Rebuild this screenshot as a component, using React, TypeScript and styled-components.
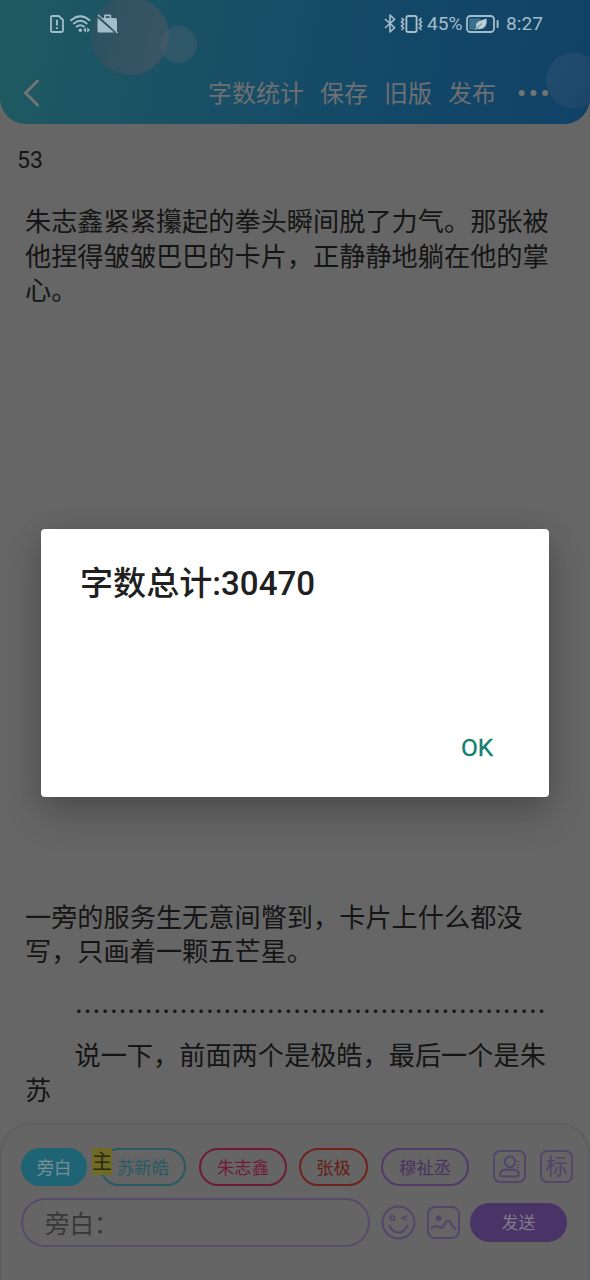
import React from 'react';
import styled, { createGlobalStyle } from 'styled-components';

const GlobalStyle = createGlobalStyle`
  *, *::before, *::after { box-sizing: border-box; }
  html, body { margin: 0; padding: 0; }
  body {
    background: #666666;
    font-family: Roboto, "Noto Sans CJK SC", sans-serif;
    color: #151515;
  }
  svg { display: block; flex: none; }
  button { font: inherit; padding: 0; background: none; border: 0; }
`;

const Screen = styled.div`
  position: relative;
  display: flex;
  flex-direction: column;
  width: 590px;
  height: 1280px;
  overflow: hidden;
  background: #666666;
`;

const Header = styled.header`
  position: relative;
  flex: none;
  display: flex;
  flex-direction: column;
  height: 124px;
  overflow: hidden;
  border-radius: 0 0 26px 26px;
  background: linear-gradient(100deg, #1f5a61 0%, #194f66 38%, #134768 70%, #104267 100%);
`;

const Bubble = styled.span<{ $x: number; $y: number; $r: number; $fill: string }>`
  position: absolute;
  left: ${(p) => p.$x - p.$r}px;
  top: ${(p) => p.$y - p.$r}px;
  width: ${(p) => p.$r * 2}px;
  height: ${(p) => p.$r * 2}px;
  border-radius: 50%;
  background: ${(p) => p.$fill};
`;

const StatusBar = styled.div`
  position: relative;
  display: flex;
  align-items: center;
  justify-content: space-between;
  height: 47px;
  padding: 0 47px 0 50px;
  color: #a3bdcb;
`;

const StatusGroup = styled.div<{ $gap: number }>`
  display: flex;
  align-items: center;
  gap: ${(p) => p.$gap}px;
`;

const StatusText = styled.span<{ $width: number; $offset?: number }>`
  width: ${(p) => p.$width}px;
  margin-left: ${(p) => p.$offset ?? 0}px;
  font-size: 19.2px;
  line-height: 24px;
  white-space: nowrap;
  padding-top: 1px;
`;

const NavBar = styled.nav`
  position: relative;
  display: flex;
  align-items: center;
  height: 77px;
  padding: 14px 41px 0 23px;
  color: #6e7072;
`;

const NavActions = styled.div`
  display: flex;
  align-items: center;
  gap: 16px;
  margin-left: auto;
`;

const NavLink = styled.button`
  padding-top: 3px;
  color: inherit;
  font-size: 24px;
  line-height: 30px;
  white-space: nowrap;
`;

const MoreButton = styled.button`
  margin-left: 6px;
  color: inherit;
`;

const Story = styled.main`
  flex: none;
  display: flex;
  flex-direction: column;
  height: 999px;
  padding: 20px 14px 0 17px;
`;

const LineNumber = styled.div`
  font-size: 23px;
  line-height: 34px;
`;

const Paragraph = styled.p<{ $top: number; $indent?: boolean }>`
  margin: ${(p) => p.$top}px 0 0 8px;
  width: 530px;
  font-family: "Noto Sans CJK SC", sans-serif;
  font-size: 26.2px;
  line-height: 34.5px;
  text-indent: ${(p) => (p.$indent ? '49.5px' : '0')};
`;

const Composer = styled.footer`
  flex: 1;
  display: flex;
  flex-direction: column;
  gap: 13px;
  padding: 23px 15px 0 19px;
  border: 2px solid #5f5e62;
  border-bottom: 0;
  border-radius: 30px 30px 0 0;
  background: #656565;
`;

const ChipRow = styled.div`
  display: flex;
  align-items: center;
  height: 37px;
`;

const Chip = styled.button<{ $w: number; $color: string; $ml?: number; $filled?: boolean; $edge?: string }>`
  position: relative;
  width: ${(p) => p.$w}px;
  height: 38px;
  margin-left: ${(p) => p.$ml ?? 0}px;
  border: ${(p) => (p.$filled ? '2px solid #1f6474' : `2px solid ${p.$edge ?? p.$color}`)};
  border-radius: 19px;
  background: ${(p) => (p.$filled ? '#1f6474' : 'transparent')};
  color: ${(p) => p.$color};
  font-size: 17.3px;
  line-height: 36px;
  white-space: nowrap;
`;

const MainBadge = styled.span`
  position: absolute;
  left: -10px;
  top: -2px;
  width: 20px;
  height: 27px;
  background: #6f6b25;
  color: #2a290f;
  font-size: 20px;
  line-height: 29px;
`;

const ToolButtons = styled.div`
  display: flex;
  gap: 14px;
  margin-left: auto;
`;

const SquareButton = styled.button`
  display: flex;
  align-items: center;
  justify-content: center;
  width: 33px;
  height: 33px;
  border: 2px solid #52476a;
  border-radius: 7px;
  color: #50456a;
  font-size: 22px;
  line-height: 28px;
`;

const InputRow = styled.div`
  display: flex;
  align-items: center;
`;

const MessageField = styled.div`
  display: flex;
  align-items: center;
  width: 349px;
  height: 49px;
  padding: 4px 22px 0 22px;
  border: 2px solid #564b68;
  border-radius: 25px;
  color: #383838;
  font-size: 24.5px;
  line-height: 32px;
`;

const InputIcons = styled.div`
  display: flex;
  align-items: center;
  gap: 11px;
  margin-left: 11px;
`;

const SendButton = styled.button`
  width: 97px;
  height: 39px;
  margin-left: 10px;
  border-radius: 20px;
  background: #4a3367;
  color: #827b8b;
  font-size: 17px;
  line-height: 41px;
`;

const Overlay = styled.div`
  position: absolute;
  inset: 0;
  display: flex;
  align-items: flex-start;
  justify-content: center;
  padding-top: 529px;
`;

const Dialog = styled.section`
  display: flex;
  flex-direction: column;
  justify-content: space-between;
  width: 508px;
  height: 268px;
  padding: 33px 48px 31px 39px;
  border-radius: 4px;
  background: #ffffff;
  box-shadow: 0 18px 38px rgba(0, 0, 0, 0.2), 0 2px 26px rgba(0, 0, 0, 0.12);
`;

const DialogTitle = styled.h1`
  margin: 0;
  font-size: 33.1px;
  font-weight: 500;
  line-height: 44px;
  color: #202020;
`;

const ConfirmButton = styled.button`
  align-self: flex-end;
  width: 48px;
  color: #12806f;
  font-size: 24.5px;
  font-weight: 400;
  line-height: 36px;
  -webkit-text-stroke: 0.3px #12806f;
`;

const SimIcon = () => (
  <svg width="14" height="18" viewBox="0 0 14 18" fill="none" stroke="currentColor">
    <path d="M2.5 1H8.8L13 5V15.5Q13 17 11.5 17H2.5Q1 17 1 15.5V2.5Q1 1 2.5 1Z" strokeWidth="1.8" />
    <path d="M7 4.8V10.6M7 12.2V14" strokeWidth="1.9" />
  </svg>
);

const WifiIcon = () => (
  <svg width="21" height="18" viewBox="0 0 21 18" fill="none" stroke="currentColor" strokeWidth="1.9" strokeLinecap="round">
    <path d="M1 5.2Q10.3 -2.8 19.6 5.2" />
    <path d="M3.9 8.5Q10.3 3.2 16.7 8.5" />
    <path d="M6.8 11.6Q10.3 8.8 13.8 11.6" />
    <circle cx="10.3" cy="15.3" r="1.7" fill="currentColor" stroke="none" />
    <path d="M16 12.5V17.5L13.2 15ZM17.2 12.5V17.5L20 15Z" fill="currentColor" stroke="none" />
  </svg>
);

const BriefcaseOffIcon = () => (
  <svg width="22" height="20" viewBox="0 0 22 20">
    <path d="M3.8 4 20 18.2V6Q20 4 18 4H14.2V1.8Q14.2.6 13 .6H8.2Q7 .6 7 1.8V4ZM8.7 4V2.3H12.6V4Z" fill="currentColor" fillRule="evenodd" />
    <path d="M.5 4.1 17.3 18.6H2Q.5 18.6.5 17Z" fill="currentColor" />
    <path d="M1 1 20.5 19" stroke="currentColor" strokeWidth="1.7" />
    <path d="M2.2 3 19 18.5" stroke="#2c5262" strokeWidth="1" />
  </svg>
);

const BluetoothIcon = () => (
  <svg width="12" height="19" viewBox="0 0 12 19" fill="none" stroke="currentColor" strokeWidth="1.6" strokeLinejoin="round">
    <path d="M1 5 10.6 13.6 6 18V1L10.6 5.4 1 14" />
  </svg>
);

const VibrateIcon = () => (
  <svg width="23" height="18" viewBox="0 0 23 18" fill="none" stroke="currentColor">
    <rect x="6.4" y="1" width="10.2" height="16" rx="1.8" strokeWidth="1.9" />
    <path d="M1.5 3 3.5 5 1.5 7 3.5 9 1.5 11 3.5 13 1.5 15M21.5 3 19.5 5 21.5 7 19.5 9 21.5 11 19.5 13 21.5 15" strokeWidth="1.7" />
  </svg>
);

const BatteryIcon = () => (
  <svg width="33" height="18" viewBox="0 0 33 18" fill="none">
    <rect x="1" y="1" width="27" height="16" rx="3.4" stroke="currentColor" strokeWidth="1.8" />
    <rect x="3.2" y="3.2" width="11.5" height="11.6" rx="1.4" fill="#3c6f8b" />
    <path d="M20.6 3.5Q21.6 14.3 13.8 14 12 14 11.2 13L9.8 15 9 14.3 10.5 12.2C8.4 6.6 15 5.6 20.6 3.5Z" fill="#b9ced9" />
    <path d="M11.5 12.6 16 8.4" stroke="#3c7089" strokeWidth=".8" />
    <path d="M31.6 5.2V12.8" stroke="currentColor" strokeWidth="2" />
  </svg>
);

const BackIcon = () => (
  <svg width="17" height="28" viewBox="0 0 17 28" fill="none" stroke="#747474" strokeWidth="3" strokeLinecap="round" strokeLinejoin="round">
    <path d="M14.5 2 2.5 14 14.5 26" />
  </svg>
);

const MoreIcon = () => (
  <svg width="31" height="8" viewBox="0 0 31 8" fill="#747474">
    <circle cx="3.8" cy="4" r="3" />
    <circle cx="15.5" cy="4" r="3" />
    <circle cx="27.2" cy="4" r="3" />
  </svg>
);

const PersonIcon = () => (
  <svg width="24" height="26" viewBox="0 0 24 26" fill="none" stroke="currentColor" strokeWidth="2">
    <circle cx="12" cy="7.8" r="5.2" />
    <path d="M6.5 15.7H15.5Q20.5 16 20.8 20.5 20.8 22.5 19 22.5H4Q2 22.5 2.2 20.5 2.5 16 6.5 15.7Z" />
    <path d="M18.8 7.5H21.3M19.2 10.7H21.5M18.8 13.7H21.3" strokeWidth="1.1" />
  </svg>
);

const WinkIcon = () => (
  <svg width="35" height="35" viewBox="0 0 35 35" fill="none" stroke="#52476a" strokeWidth="2" strokeLinecap="round">
    <circle cx="17.5" cy="17.5" r="16" />
    <circle cx="11.3" cy="13" r="2.3" strokeWidth="1.6" />
    <path d="M25.5 10.8 21.2 13 25.5 15.2" strokeWidth="1.5" />
    <path d="M8.5 21Q12 27.5 17.5 27.5T26.5 21" strokeWidth="2.2" />
  </svg>
);

const PictureIcon = () => (
  <svg width="33" height="33" viewBox="0 0 33 33" fill="none" stroke="#52476a" strokeWidth="2" strokeLinecap="round">
    <rect x="1" y="1" width="31" height="31" rx="7" />
    <circle cx="11.5" cy="12.3" r="2.8" fill="#52476a" stroke="none" />
    <path d="M4.5 22Q8.3 18.8 12.2 21 15.3 23 17.2 19 20.8 11.2 24 17.5 26 21.8 28.7 22.8" strokeWidth="2.2" />
  </svg>
);

export default function App() {
  return (
    <>
      <GlobalStyle />
      <Screen>
        <Header>
          <Bubble $x={130} $y={36} $r={39} $fill="linear-gradient(100deg, #2c5261, #3a5564)" />
          <Bubble $x={178} $y={44} $r={18.5} $fill="rgba(74, 96, 110, 0.42)" />
          <Bubble $x={573} $y={80} $r={27.5} $fill="linear-gradient(120deg, #234d6e, #1a4568)" />
          <StatusBar>
            <StatusGroup $gap={6}>
              <SimIcon />
              <WifiIcon />
              <BriefcaseOffIcon />
            </StatusGroup>
            <StatusGroup $gap={4}>
              <BluetoothIcon />
              <VibrateIcon />
              <StatusText $width={35}>45%</StatusText>
              <BatteryIcon />
              <StatusText $width={37} $offset={3}>8:27</StatusText>
            </StatusGroup>
          </StatusBar>
          <NavBar>
            <BackIcon />
            <NavActions>
              <NavLink>字数统计</NavLink>
              <NavLink>保存</NavLink>
              <NavLink>旧版</NavLink>
              <NavLink>发布</NavLink>
              <MoreButton aria-label="更多"><MoreIcon /></MoreButton>
            </NavActions>
          </NavBar>
        </Header>

        <Story lang="zh-CN">
          <LineNumber>53</LineNumber>
          <Paragraph $top={25}>
            朱志鑫紧紧攥起的拳头瞬间脱了力气。那张被他捏得皱皱巴巴的卡片，正静静地躺在他的掌心。
          </Paragraph>
          <Paragraph $top={592}>
            一旁的服务生无意间瞥到，卡片上什么都没写，只画着一颗五芒星。
          </Paragraph>
          <Paragraph $top={25} $indent>{'…'.repeat(18)}</Paragraph>
          <Paragraph $top={10} $indent>
            说一下，前面两个是极皓，最后一个是朱苏
          </Paragraph>
        </Story>

        <Composer>
          <ChipRow>
            <Chip $w={66} $color="#7b8f94" $filled>旁白</Chip>
            <Chip $w={86} $color="#285a63" $ml={13}>
              苏新皓
              <MainBadge>主</MainBadge>
            </Chip>
            <Chip $w={88} $color="#701b38" $ml={13}>朱志鑫</Chip>
            <Chip $w={69} $color="#661c17" $edge="#70221d" $ml={12}>张极</Chip>
            <Chip $w={88} $color="#493160" $edge="#523b69" $ml={13}>穆祉丞</Chip>
            <ToolButtons>
              <SquareButton aria-label="角色"><PersonIcon /></SquareButton>
              <SquareButton>标</SquareButton>
            </ToolButtons>
          </ChipRow>
          <InputRow>
            <MessageField>旁白：</MessageField>
            <InputIcons>
              <WinkIcon />
              <PictureIcon />
            </InputIcons>
            <SendButton>发送</SendButton>
          </InputRow>
        </Composer>

        <Overlay>
          <Dialog role="dialog">
            <DialogTitle>字数总计:30470</DialogTitle>
            <ConfirmButton>OK</ConfirmButton>
          </Dialog>
        </Overlay>
      </Screen>
    </>
  );
}
